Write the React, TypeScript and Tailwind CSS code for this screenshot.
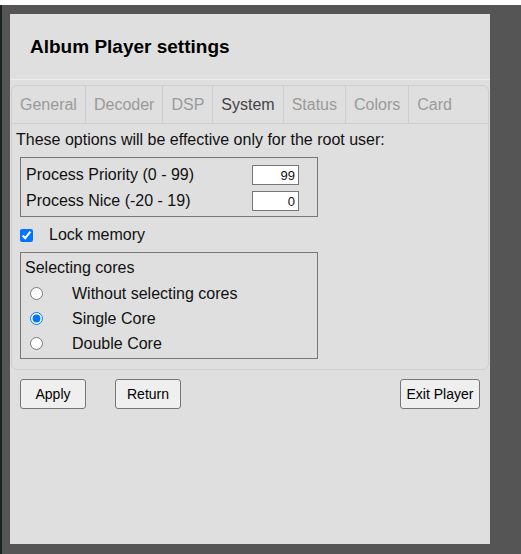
import React, { useState } from 'react';

const tabs = ['General', 'Decoder', 'DSP', 'System', 'Status', 'Colors', 'Card'];

export default function App() {
  const [active, setActive] = useState('System');
  const [core, setCore] = useState('single');
  const [lockMem, setLockMem] = useState(true);

  return (
    <div className="relative w-[521px] h-[554px] bg-[#555555] overflow-hidden font-['Liberation_Sans',Arial,sans-serif] text-[#111]">
      {/* strip of the page behind the dialog */}
      <div className="h-[5px] bg-white" />
      <div className="absolute left-0 top-[5px] w-[2px] h-[549px] bg-[#1c2422]" />

      <div className="ml-[10px] mt-[9px] w-[480px] h-[530px] bg-[#dfdfdf] flex flex-col">
        {/* Dialog header */}
        <header className="h-[66px] flex items-center px-[20px] border-b border-[#ececec]">
          <h1 className="text-[19px] font-bold text-black pt-[1px]">Album Player settings</h1>
        </header>

        {/* Tab panel */}
        <div className="mx-[1px] mt-[5px] border border-[#cfcfcf] rounded-[6px]">
          <div className="flex h-[38px] border-b border-[#cfcfcf]">
            {tabs.map((t, i) => (
              <button
                key={t}
                onClick={() => setActive(t)}
                className={`h-full px-[8px] text-[16px] ${i < tabs.length - 1 ? 'border-r border-[#cfcfcf]' : ''} ${
                  t === active ? 'text-[#444]' : 'text-[#9a9a9a]'
                }`}
              >
                {t}
              </button>
            ))}
          </div>

          <div className="pl-[4px] pt-[7px] pb-[10px]">
            <p className="text-[16px] leading-[18px]">These options will be effective only for the root user:</p>

            <div className="ml-[4px] mt-[8px] w-[298px] h-[60px] border border-[#777] pl-[5px] pr-[18px] pt-[7px] flex flex-col gap-[6px]">
              <div className="flex items-center justify-between h-[20px]">
                <span className="text-[16px]">Process Priority (0 - 99)</span>
                <input
                  defaultValue="99"
                  className="w-[47px] h-[20px] bg-white border border-[#767676] text-right text-[13px] pr-[3px] outline-none"
                />
              </div>
              <div className="flex items-center justify-between h-[20px]">
                <span className="text-[16px]">Process Nice (-20 - 19)</span>
                <input
                  defaultValue="0"
                  className="w-[47px] h-[20px] bg-white border border-[#767676] text-right text-[13px] pr-[3px] outline-none"
                />
              </div>
            </div>

            <label className="flex items-center h-[24px] mt-[6px] ml-[4px]">
              <input
                type="checkbox"
                checked={lockMem}
                onChange={(e) => setLockMem(e.target.checked)}
                className="w-[13px] h-[13px] m-0 accent-[#0075ff]"
              />
              <span className="ml-[16px] text-[16px]">Lock memory</span>
            </label>

            <div className="ml-[4px] mt-[5px] w-[298px] h-[107px] border border-[#777] pl-[4px] pt-[6px]">
              <div className="text-[16px] leading-[18px]">Selecting cores</div>
              <div className="mt-[4px] flex flex-col">
                {[
                  ['none', 'Without selecting cores'],
                  ['single', 'Single Core'],
                  ['double', 'Double Core'],
                ].map(([v, l]) => (
                  <label key={v} className="flex items-center h-[25px]">
                    <input
                      type="radio"
                      name="core"
                      checked={core === v}
                      onChange={() => setCore(v)}
                      className="w-[13px] h-[13px] m-0 ml-[5px] accent-[#0075ff]"
                    />
                    <span className="ml-[29px] text-[16px]">{l}</span>
                  </label>
                ))}
              </div>
            </div>
          </div>
        </div>

        {/* Buttons */}
        <div className="flex items-center mt-[9px] px-[10px]">
          <button className="w-[66px] h-[30px] pt-[1px] bg-[#efefef] border border-[#767676] rounded-[3px] text-[14px] text-black">
            Apply
          </button>
          <button className="ml-[29px] w-[66px] h-[30px] pt-[1px] bg-[#efefef] border border-[#767676] rounded-[3px] text-[14px] text-black">
            Return
          </button>
          <button className="ml-auto w-[80px] h-[30px] pt-[1px] bg-[#efefef] border border-[#767676] rounded-[3px] text-[14px] text-black">
            Exit Player
          </button>
        </div>
      </div>
    </div>
  );
}
